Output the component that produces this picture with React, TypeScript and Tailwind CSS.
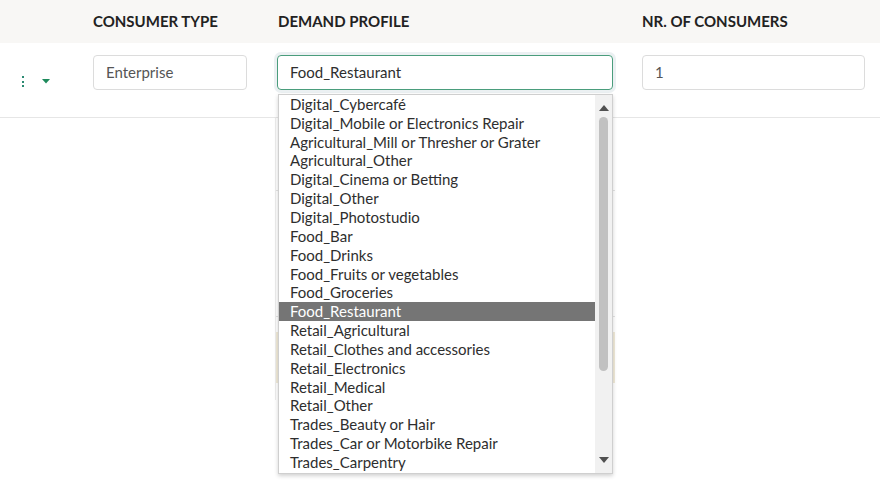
import React from "react";

const OPTIONS = [
  "Digital_Cybercafé",
  "Digital_Mobile or Electronics Repair",
  "Agricultural_Mill or Thresher or Grater",
  "Agricultural_Other",
  "Digital_Cinema or Betting",
  "Digital_Other",
  "Digital_Photostudio",
  "Food_Bar",
  "Food_Drinks",
  "Food_Fruits or vegetables",
  "Food_Groceries",
  "Food_Restaurant",
  "Retail_Agricultural",
  "Retail_Clothes and accessories",
  "Retail_Electronics",
  "Retail_Medical",
  "Retail_Other",
  "Trades_Beauty or Hair",
  "Trades_Car or Motorbike Repair",
  "Trades_Carpentry",
];

const SELECTED = "Food_Restaurant";

/** 行頭のメニュー（縦三点 + キャレット） */
function RowMenu() {
  return (
    <div className="flex w-[93px] items-start pt-[21px] pl-[22px]">
      <div className="flex flex-col gap-[2.5px]">
        <span className="h-[2px] w-[2px] bg-[#2b8a72]" />
        <span className="h-[2px] w-[2px] bg-[#2b8a72]" />
        <span className="h-[2px] w-[2px] bg-[#2b8a72]" />
      </div>
      <svg width="8" height="5" viewBox="0 0 8 5" className="ml-[18px] mt-[3px]">
        <path d="M0 0 L8 0 L4 4.5 Z" fill="#1e8a5c" />
      </svg>
    </div>
  );
}

/** プルダウン一覧（ネイティブ select のリストボックス風） */
function Listbox() {
  return (
    <div className="absolute left-[278px] top-[94px] flex h-[380px] w-[335px] border border-[#cfcfcf] bg-white shadow-[0_2px_4px_rgba(0,0,0,0.18)]">
      <ul className="flex-1 overflow-hidden">
        {OPTIONS.map((o) => (
          <li
            key={o}
            className={[
              "flex h-[18.85px] items-center whitespace-nowrap pl-[11px] text-[15px] leading-none",
              o === SELECTED ? "bg-[#757575] text-white" : "text-[#2e2e2e]",
            ].join(" ")}
          >
            {o}
          </li>
        ))}
      </ul>
      <div className="flex w-[17px] flex-col items-center bg-[#f1f1f1]">
        <svg width="10" height="6" viewBox="0 0 10 6" className="mt-[10px]">
          <path d="M0 6 L5 0 L10 6 Z" fill="#505050" />
        </svg>
        <div className="mt-[6px] h-[254px] w-[9px] rounded-full bg-[#c1c1c1]" />
        <div className="flex-1" />
        <svg width="10" height="6" viewBox="0 0 10 6" className="mb-[10px]">
          <path d="M0 0 L10 0 L5 6 Z" fill="#505050" />
        </svg>
      </div>
    </div>
  );
}

export default function App() {
  return (
    <div className="relative h-[481px] w-[890px] overflow-hidden bg-white font-['Lato','Noto_Sans',sans-serif]">
      <div className="w-[880px]">
        {/* ヘッダー */}
        <div className="flex h-[43px] items-center bg-[#f8f7f5] text-[15px] font-bold text-[#222222]">
          <div className="w-[93px]" />
          <div className="w-[185px]">CONSUMER TYPE</div>
          <div className="w-[364px]">DEMAND PROFILE</div>
          <div>NR. OF CONSUMERS</div>
        </div>

        {/* 行 */}
        <div className="flex h-[75px] border-b border-[#e6e6e6] pt-[12px]">
          <RowMenu />
          <div className="w-[185px]">
            <div className="flex h-[35px] w-[154px] items-center rounded-[4px] border border-[#dcdcdc] px-[12px] text-[15px] text-[#555555]">
              Enterprise
            </div>
          </div>
          <div className="w-[364px]">
            <div className="-ml-px flex h-[35px] w-[336px] items-center rounded-[4px] border border-[#4a9d7c] px-[12px] text-[15px] text-[#2e2e2e] shadow-[0_0_0_3px_rgba(110,150,160,0.14)]">
              Food_Restaurant
            </div>
          </div>
          <div>
            <div className="flex h-[35px] w-[223px] items-center rounded-[4px] border border-[#dcdcdc] px-[12px] text-[15px] text-[#555555]">
              1
            </div>
          </div>
        </div>

        {/* 展開された詳細（一覧の下にほぼ隠れている） */}
        <div className="ml-[275px] flex h-[282px] w-[340px] flex-col border-l border-[#ececec]">
          <div className="h-[72px]" />
          <div className="h-px bg-[#e3e3e3]" />
          <div className="h-[125px]" />
          <div className="h-px bg-[#e3e3e3]" />
          <div className="h-[15px]" />
          <div className="h-[51px] bg-[#f1ebd9]" />
        </div>
      </div>

      <Listbox />
    </div>
  );
}
